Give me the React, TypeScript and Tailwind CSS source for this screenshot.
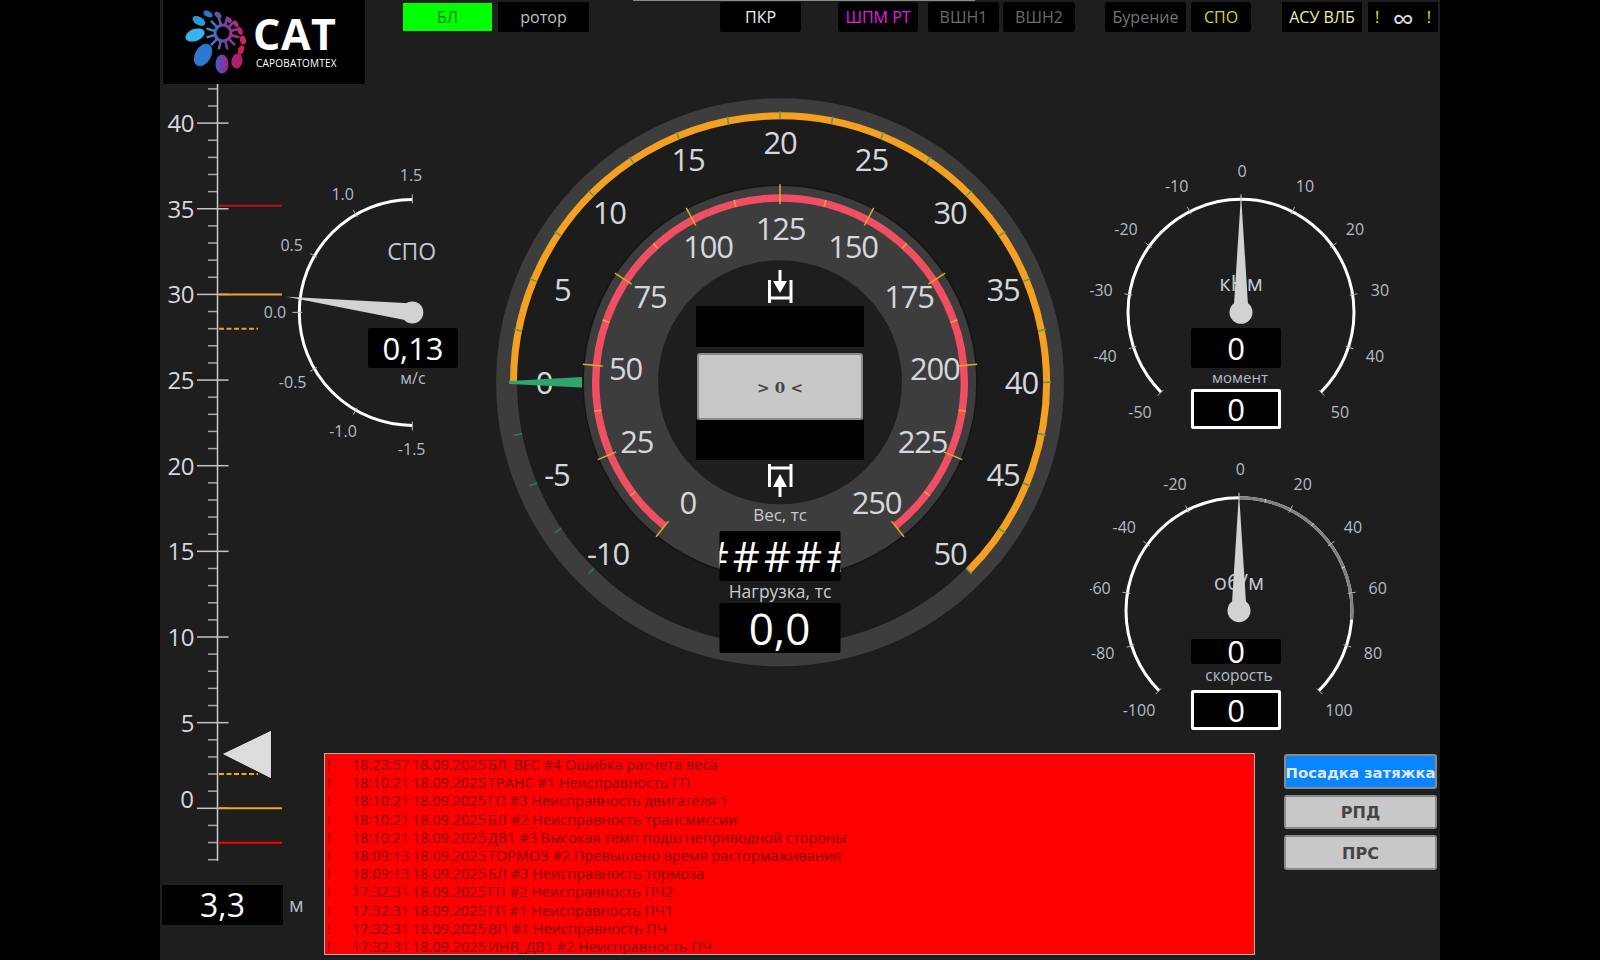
import React from "react";

const LABEL = "#b4bcc4";
const TEXT = "#d4d8dc";

const polar = (cx: number, cy: number, r: number, deg: number) => {
  const a = ((deg - 90) * Math.PI) / 180;
  return [cx + r * Math.cos(a), cy + r * Math.sin(a)];
};

const arc = (cx: number, cy: number, r: number, from: number, to: number) => {
  const [x0, y0] = polar(cx, cy, r, from);
  const [x1, y1] = polar(cx, cy, r, to);
  return `M${x0} ${y0}A${r} ${r} 0 ${to - from > 180 ? 1 : 0} 1 ${x1} ${y1}`;
};

function Tick({ cx, cy, r0, r1, deg, color, w = 1 }: { cx: number; cy: number; r0: number; r1: number; deg: number; color: string; w?: number }) {
  const [x0, y0] = polar(cx, cy, r0, deg);
  const [x1, y1] = polar(cx, cy, r1, deg);
  return <line x1={x0} y1={y0} x2={x1} y2={y1} stroke={color} strokeWidth={w} />;
}

function Label({ x, y, size = 16, fill = LABEL, children, spacing }: { x: number; y: number; size?: number; fill?: string; children: React.ReactNode; spacing?: number }) {
  return (
    <text x={x} y={y} fontSize={size} fill={fill} textAnchor="middle" dominantBaseline="central" letterSpacing={spacing}>
      {children}
    </text>
  );
}

function Needle({ cx, cy, tx, ty, half, hub }: { cx: number; cy: number; tx: number; ty: number; half: number; hub: number }) {
  const dx = tx - cx;
  const dy = ty - cy;
  const len = Math.hypot(dx, dy);
  const nx = (-dy / len) * half;
  const ny = (dx / len) * half;
  return (
    <g fill="#d2d2d2">
      <polygon points={`${tx},${ty} ${cx + nx},${cy + ny} ${cx - nx},${cy - ny}`} />
      <circle cx={cx} cy={cy} r={hub} />
    </g>
  );
}

function ValueBox({ children, className }: { children: React.ReactNode; className: string }) {
  return <div className={"flex items-center justify-center overflow-hidden whitespace-nowrap rounded-[2px] bg-black leading-none text-white " + className}>{children}</div>;
}

function Tab({ children, className }: { children: React.ReactNode; className: string }) {
  return <div className={"flex h-[30px] items-center rounded-[3px] bg-black text-[16px] " + className}>{children}</div>;
}

function Logo() {
  const petals: [number, number, number, number, number, string][] = [
    [195, 35, 10, 6, -20, "#35b5ee"],
    [199, 21, 7, 4, 30, "#2a9ad8"],
    [208, 14, 5, 3, 30, "#2a78c0"],
    [218, 15, 4, 2.5, 40, "#5a55a8"],
    [229, 20, 3.5, 2.2, 50, "#8a3a90"],
    [236, 24, 3.5, 2.2, 60, "#a83080"],
    [240, 31, 4, 2.5, 70, "#b82a70"],
    [243, 40, 4.5, 3, 80, "#c02868"],
    [241, 50, 5, 3, 110, "#c82050"],
    [203, 55, 12, 8, -60, "#2a78d0"],
    [222, 64, 6.5, 9.5, 0, "url(#petal)"],
    [237, 61, 5.5, 7.5, 10, "#b02070"],
  ];
  return (
    <div className="ml-[3px] flex h-[84px] w-[202px] bg-black">
      <svg width="90" height="84" viewBox="163 0 90 84" className="shrink-0">
        <defs>
          <linearGradient id="spoke" gradientUnits="userSpaceOnUse" x1="205" y1="33" x2="241" y2="33">
            <stop offset="0" stopColor="#2a9ae0" />
            <stop offset="0.5" stopColor="#6a48b0" />
            <stop offset="1" stopColor="#c02868" />
          </linearGradient>
          <linearGradient id="petal" x1="0" y1="0" x2="1" y2="0">
            <stop offset="0" stopColor="#3a60c8" />
            <stop offset="1" stopColor="#a82080" />
          </linearGradient>
        </defs>
        {petals.map(([x, y, rx, ry, rot, fill]) => (
          <ellipse key={`${x}${y}`} cx={x} cy={y} rx={rx} ry={ry} fill={fill} transform={`rotate(${rot} ${x} ${y})`} />
        ))}
        <circle cx="223" cy="33" r="8" fill="none" stroke="url(#spoke)" strokeWidth="3" />
        {Array.from({ length: 12 }, (_, i) => {
          const [x0, y0] = polar(223, 33, 9, i * 30 + 15);
          const [x1, y1] = polar(223, 33, 17, i * 30 + 15);
          return <line key={i} x1={x0} y1={y0} x2={x1 + 0.01} y2={y1 + 0.01} stroke="url(#spoke)" strokeWidth="2.5" />;
        })}
      </svg>
      <div className="flex flex-col text-white">
        <span className="mt-[12px] text-[43px] font-bold leading-[44px] tracking-[0.5px]">CAT</span>
        <span className="ml-[3px] text-[10px] leading-[14px] tracking-[0.2px]">САРОВАТОМТЕХ</span>
      </div>
    </div>
  );
}

function TopBar() {
  return (
    <div className="relative flex h-[84px] shrink-0 items-start">
      <Logo />
      <Tab className="ml-[38px] mt-[3px] !h-[28px] w-[89px] justify-center !rounded-none !bg-[#00ff00] text-[#0f7a0f]">БЛ</Tab>
      <Tab className="ml-[6px] mt-[2px] w-[91px] justify-center !rounded-none text-[#c0c0c0]">ротор</Tab>
      <Tab className="ml-[131px] mt-[2px] w-[81px] justify-center text-[#f0f0f0]">ПКР</Tab>
      <Tab className="ml-[37px] mt-[2px] w-[80px] justify-center text-[#e020e0]">ШПМ РТ</Tab>
      <Tab className="ml-[10px] mt-[2px] w-[71px] justify-center text-[#6c6c6c]">ВШН1</Tab>
      <Tab className="ml-[4px] mt-[2px] w-[72px] justify-center text-[#6c6c6c]">ВШН2</Tab>
      <Tab className="ml-[30px] mt-[2px] w-[81px] justify-center text-[#747478]">Бурение</Tab>
      <Tab className="ml-[5px] mt-[2px] w-[60px] justify-center text-[#d8d820]">СПО</Tab>
      <Tab className="ml-[31px] mt-[2px] w-[80px] justify-center !rounded-none text-[#f0f0a8]">АСУ ВЛБ</Tab>
      <Tab className="ml-[6px] mt-[2px] w-[70px] justify-between !rounded-none px-[7px] text-[#e8e820]">
        <span>!</span>
        <span className="mt-[3px] text-[30px] leading-[26px] text-[#dcdce8]">∞</span>
        <span>!</span>
      </Tab>
      <div className="absolute left-[473px] top-0 h-[1px] w-[342px] bg-[#8a8a8a]" />
    </div>
  );
}

const scaleY = (v: number) => 808.3 - 17.13 * v;

function DepthScale() {
  const units = Array.from({ length: 46 }, (_, i) => i - 3);
  return (
    <div className="flex w-[164px] shrink-0 flex-col">
      <svg width="164" height="784" viewBox="160 84 164 784">
        <line x1="217.5" y1="84" x2="217.5" y2="861" stroke="#cccccc" strokeWidth="1.5" />
        {units.map((v) =>
          v % 5 === 0 ? (
            <line key={v} x1="197" x2="228.5" y1={scaleY(v)} y2={scaleY(v)} stroke="#c4c4c4" strokeWidth="1.5" />
          ) : (
            <line key={v} x1="208" x2="217" y1={scaleY(v)} y2={scaleY(v)} stroke="#a8a8a8" strokeWidth="1.5" />
          ),
        )}
        {[5, 10, 15, 20, 25, 30, 35, 40].map((v) => (
          <text key={v} x="194" y={scaleY(v) - 0.5} fontSize="24" fill={TEXT} textAnchor="end" dominantBaseline="central" letterSpacing="-0.5">
            {v}
          </text>
        ))}
        <text x="194" y="798.5" fontSize="24" fill={TEXT} textAnchor="end" dominantBaseline="central">
          0
        </text>
        <line x1="219" x2="282" y1="205.7" y2="205.7" stroke="#c01010" strokeWidth="2" />
        <line x1="219" x2="282" y1="294.5" y2="294.5" stroke="#f0a030" strokeWidth="2" />
        <line x1="219" x2="258" y1="328.7" y2="328.7" stroke="#f0a030" strokeWidth="2" strokeDasharray="5 2.5" />
        <polygon points="221.7,754 271.5,730 271.5,779" fill="#dcdcdc" stroke="#14141c" strokeWidth="1" />
        <line x1="219" x2="258" y1="774" y2="774" stroke="#ffa500" strokeWidth="2" strokeDasharray="5 2.5" />
        <line x1="219" x2="282" y1="808.3" y2="808.3" stroke="#ffa500" strokeWidth="2" />
        <line x1="219" x2="282" y1="842.7" y2="842.7" stroke="#ff0000" strokeWidth="2" />
      </svg>
      <div className="ml-[2px] mt-[17px] flex items-center">
        <ValueBox className="h-[40px] w-[121px] shrink-0 text-[32px]">3,3</ValueBox>
        <span className="ml-[6px] text-[20px] text-[#b4bcc4]">м</span>
      </div>
    </div>
  );
}

function TripGauge() {
  const cx = 412.3;
  const cy = 312.4;
  const labels: [string, number, number][] = [
    ["1.5", 411, 175],
    ["1.0", 342.7, 194],
    ["0.5", 291.7, 245],
    ["0.0", 275, 312],
    ["-0.5", 292.7, 381.7],
    ["-1.0", 343, 430.7],
    ["-1.5", 411.7, 449],
  ];
  return (
    <div className="relative h-[400px] w-[220px] shrink-0">
      <svg width="220" height="400" viewBox="260 84 220 400">
        <path d={arc(cx, cy, 113, 180, 360)} fill="none" stroke="#ffffff" strokeWidth="3" />
        {[180, 210, 240, 270, 300, 330, 360].map((d) => (
          <Tick key={d} cx={cx} cy={cy} r0={d === 180 || d === 360 ? 109 : 110} r1={d === 270 ? 120 : 118} deg={d} color="#b8b8b8" />
        ))}
        {labels.map(([s, x, y]) => (
          <Label key={s} x={x} y={y}>
            {s}
          </Label>
        ))}
        <Label x={411.7} y={251} size={23} fill="#c0c8d0">
          СПО
        </Label>
        <Needle cx={cx} cy={cy} tx={286.7} ty={296.7} half={9} hub={11} />
      </svg>
      <div className="absolute left-[108px] top-[244px] flex w-[90px] flex-col items-center">
        <ValueBox className="h-[40px] w-[90px] text-[31px]">0,13</ValueBox>
        <span className="flex h-[20px] items-center text-[16px] text-[#b4bcc4]">м/с</span>
      </div>
    </div>
  );
}

function WeightGauge() {
  const cx = 780;
  const cy = 382.3;
  const outer = (v: number) => (v - 20) * 4.5;
  const inner = (v: number) => (v - 125) * 1.13;
  const outerTicks = Array.from({ length: 25 }, (_, i) => -10 + i * 2.5);
  const innerTicks = Array.from({ length: 21 }, (_, i) => i * 12.5);
  const outerLabels: [string, number, number][] = [
    ["20", 780, 141.5],
    ["15", 688, 158.7],
    ["25", 871.4, 158.7],
    ["10", 609.2, 211.8],
    ["30", 950, 211.8],
    ["5", 562.3, 289.3],
    ["35", 1003, 289.3],
    ["0", 544, 382.2],
    ["40", 1021.4, 382.2],
    ["-5", 557, 474],
    ["45", 1003, 474],
    ["-10", 608, 552.5],
    ["50", 950, 552.5],
  ];
  const innerLabels: [string, number, number][] = [
    ["125", 780.6, 228.1],
    ["100", 708, 245.5],
    ["150", 853, 245.5],
    ["75", 650, 295.5],
    ["175", 909, 295.5],
    ["50", 625.5, 367.9],
    ["200", 934.7, 367.9],
    ["25", 636.7, 441.4],
    ["225", 922.5, 441.4],
    ["0", 687.8, 501.5],
    ["250", 876.5, 501.5],
  ];
  return (
    <div className="relative ml-[10px] h-[590px] w-[580px] shrink-0">
      <svg width="580" height="590" viewBox="490 84 580 590">
        <circle cx={cx} cy={cy} r="273.5" fill="#1c1c1c" stroke="#3d3d3d" strokeWidth="21" />
        <path d={arc(cx, cy, 266.5, outer(0), outer(50))} fill="none" stroke="#f5a020" strokeWidth="7" />
        {outerTicks.map((v) => (
          <Tick key={v} cx={cx} cy={cy} r0={263} r1={271} deg={outer(v)} color={v < 0 ? "#2a7a5c" : "#5a9a50"} w={1.5} />
        ))}
        {outerLabels.map(([s, x, y]) => (
          <Label key={s} x={x} y={y} size={31} fill={TEXT} spacing={-1.2}>
            {s}
          </Label>
        ))}
        <polygon points="509,381 509,384 582,387.5 582,377" fill="#2ea56e" />
        <circle cx={cx} cy={cy} r="197" fill="#3d3d3d" stroke="#141414" strokeWidth="1.5" />
        <path d={arc(cx, cy, 184.3, inner(0), inner(250))} fill="none" stroke="#f04e62" strokeWidth="7.5" />
        {innerTicks.map((v) =>
          v % 25 === 0 ? (
            <Tick key={v} cx={cx} cy={cy} r0={178} r1={198} deg={inner(v)} color="#d8b020" w={1.5} />
          ) : (
            <Tick key={v} cx={cx} cy={cy} r0={181} r1={188} deg={inner(v)} color="#f5a030" w={1.5} />
          ),
        )}
        <circle cx={cx} cy={cy} r="122" fill="#1e1e1e" />
        {innerLabels.map(([s, x, y]) => (
          <Label key={s} x={x} y={y} size={31} fill={TEXT} spacing={-1.2}>
            {s}
          </Label>
        ))}
        <g fill="none" stroke="#ffffff" strokeWidth="3">
          <path d="M769.5 280V303M791 280V303M769.5 298H791" />
          <path d="M780 270V283" />
          <path d="M769.5 464V487M791 464V487M769.5 468H791" />
          <path d="M780 484V497" />
        </g>
        <polygon points="773,281 787,281 780,293" fill="#ffffff" />
        <polygon points="773,487 787,487 780,474" fill="#ffffff" />
      </svg>
      <div className="absolute left-[205px] top-[222px] flex w-[170px] flex-col items-center">
        <div className="h-[41px] w-[168px] bg-black" />
        <button className="mt-[6px] flex h-[67px] w-[166px] items-center justify-center rounded-[3px] border-2 border-[#8a8a8a] bg-[#c8c8c8] pt-[3px] font-['DejaVu_Serif',serif] text-[15px] font-bold text-[#444444]">
          {"> 0 <"}
        </button>
        <div className="h-[40px] w-[168px] bg-black" />
        <span className="mt-[44px] flex h-[22px] items-center text-[17px] text-[#c8ccd0]">Вес, тс</span>
        <ValueBox className="mt-[5px] h-[50px] w-[121px] -translate-x-[0.5px] text-[42px] tracking-[4px]">#####</ValueBox>
        <span className="flex h-[21px] items-center text-[17.5px] text-[#c8ccd0]">Нагрузка, тс</span>
        <ValueBox className="mt-[1px] h-[50px] w-[121px] -translate-x-[0.5px] text-[44px]">0,0</ValueBox>
      </div>
    </div>
  );
}

function Dial({
  top,
  cx,
  cy,
  unit,
  labels,
  grey,
  children,
}: {
  top: number;
  cx: number;
  cy: number;
  unit: string;
  labels: [string, number, number][];
  grey?: boolean;
  children: React.ReactNode;
}) {
  const majors = Array.from({ length: 11 }, (_, i) => -135 + i * 27);
  return (
    <div className="relative h-[275px] w-[310px]">
      <svg width="310" height="275" viewBox={`1090 ${top} 310 275`}>
        <path d={arc(cx, cy, 113, -135, 135)} fill="none" stroke="#ffffff" strokeWidth="3" />
        {grey && <path d={arc(cx, cy, 113, 0, 94.5)} fill="none" stroke="#808080" strokeWidth="3" />}
        {majors.map((d) => (
          <Tick key={d} cx={cx} cy={cy} r0={110} r1={118} deg={d} color="#b8b8b8" />
        ))}
        {grey && [13.5, 40.5, 67.5].map((d) => <Tick key={d} cx={cx} cy={cy} r0={111} r1={115} deg={d} color="#d0d0d0" />)}
        {labels.map(([s, x, y]) => (
          <Label key={s} x={x} y={y}>
            {s}
          </Label>
        ))}
        <Label x={cx} y={cy - 30} size={22} fill="#c0c8d0">
          {unit}
        </Label>
        <Needle cx={cx} cy={cy} tx={cx} ty={cy - 118} half={7.5} hub={11.5} />
      </svg>
      {children}
    </div>
  );
}

function Gauges() {
  return (
    <div className="ml-[20px] flex flex-col gap-[23px] pt-[76px]">
      <Dial
        top={160}
        cx={1241}
        cy={312.3}
        unit="кНм"
        labels={[
          ["0", 1242, 171],
          ["-10", 1176.7, 186],
          ["10", 1305, 186],
          ["-20", 1126, 229],
          ["20", 1355, 229],
          ["-30", 1101, 290],
          ["30", 1380, 290],
          ["-40", 1105, 355.7],
          ["40", 1375, 355.7],
          ["-50", 1140, 412.3],
          ["50", 1340, 412.3],
        ]}
      >
        <div className="absolute left-[101px] top-[168px] flex w-[90px] flex-col items-center">
          <ValueBox className="h-[40px] w-[90px] text-[31px]">0</ValueBox>
          <span className="ml-[8px] flex h-[20px] items-center pb-[2px] text-[15px] text-[#b4bcc4]">момент</span>
          <ValueBox className="mt-[1px] h-[40px] w-[90px] border-[3px] border-white text-[31px]">0</ValueBox>
        </div>
      </Dial>
      <Dial
        top={458}
        cx={1239}
        cy={610.7}
        unit="об/м"
        grey
        labels={[
          ["0", 1240.3, 469],
          ["-20", 1175, 484],
          ["20", 1302.7, 484],
          ["-40", 1124.3, 526.7],
          ["40", 1353, 526.7],
          ["-60", 1099, 587.7],
          ["60", 1377.7, 587.7],
          ["-80", 1102.7, 653.3],
          ["80", 1373, 653.3],
          ["-100", 1139, 710],
          ["100", 1339, 710],
        ]}
      >
        <div className="absolute left-[101px] top-[181px] flex w-[90px] flex-col items-center">
          <ValueBox className="h-[25px] w-[90px] text-[31px]">0</ValueBox>
          <span className="ml-[6px] flex h-[26px] items-center pb-[3px] text-[15.5px] text-[#b4bcc4]">скорость</span>
          <ValueBox className="h-[40px] w-[90px] border-[3px] border-white text-[31px]">0</ValueBox>
        </div>
      </Dial>
    </div>
  );
}

const ALARMS = [
  ["18:23:57", "БЛ_ВЕС #4 Ошибка расчета веса"],
  ["18:10:21", "ТРАНС #1 Неисправность ГП"],
  ["18:10:21", "ГП #3 Неисправность двигателя 1"],
  ["18:10:21", "БЛ #2 Неисправность трансмиссии"],
  ["18:10:21", "ДВ1 #3 Высокая темп подш неприводной стороны"],
  ["18:09:13", "ТОРМОЗ #2 Превышено время растормаживания"],
  ["18:09:13", "БЛ #3 Неисправность тормоза"],
  ["17:32:31", "ГП #2 Неисправность ПЧ2"],
  ["17:32:31", "ГП #1 Неисправность ПЧ1"],
  ["17:32:31", "ВП #1 Неисправность ПЧ"],
  ["17:32:31", "ИНВ_ДВ1 #2 Неисправность ПЧ"],
];

function AlarmList() {
  return (
    <div className="h-[202px] w-[931px] overflow-hidden border border-[#b0b0b0] bg-[#ff0000] pt-[2px] text-[14.5px] leading-[18.2px] text-[#7e0000]">
      {ALARMS.map(([time, text], i) => (
        <div key={i} className="flex h-[18.2px] whitespace-nowrap">
          <span className="w-[27px] shrink-0 pl-[2px]">!</span>
          <span className="w-[60px] shrink-0">{time}</span>
          <span className="w-[76px] shrink-0">18.09.2025</span>
          <span>{text}</span>
        </div>
      ))}
    </div>
  );
}

function ModeButtons() {
  const base = "flex w-[153px] items-center justify-center whitespace-nowrap rounded-[3px] border-2 border-[#8a8a8a] font-['DejaVu_Sans',sans-serif] font-bold";
  return (
    <div className="ml-[29px] mt-[1px] flex flex-col gap-[6px]">
      <button className={base + " h-[35px] bg-[#0a84ff] pt-[3px] text-[14.8px] text-[#dce8ff]"}>Посадка затяжка</button>
      <button className={base + " h-[34px] bg-[#c8c8c8] pt-[2px] text-[16px] text-[#444444]"}>РПД</button>
      <button className={base + " h-[35px] bg-[#c8c8c8] pt-[2px] text-[16px] text-[#444444]"}>ПРС</button>
    </div>
  );
}

export default function App() {
  return (
    <div className="flex h-[960px] w-full justify-center overflow-hidden bg-black font-['Open_Sans',sans-serif]">
      <div className="flex h-[960px] w-[1280px] flex-col bg-[#1e1e1e]">
        <TopBar />
        <div className="flex min-h-0 flex-1">
          <DepthScale />
          <div className="flex min-w-0 flex-1 flex-col">
            <div className="-ml-[64px] flex h-[669px] items-start">
              <TripGauge />
              <WeightGauge />
              <Gauges />
            </div>
            <div className="flex items-start">
              <AlarmList />
              <ModeButtons />
            </div>
          </div>
        </div>
      </div>
    </div>
  );
}
